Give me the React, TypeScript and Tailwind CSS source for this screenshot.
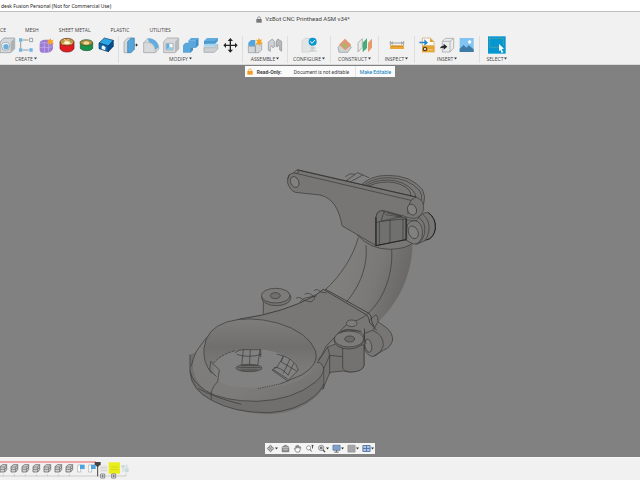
import type { ReactNode } from "react";

interface ToolGroupProps {
    label: string;
    className: string;
    tools: Array<Tool>;
}

interface Tool {
    name: string;
    icon: ReactNode;
    menu?: boolean;
}

const createTools: Array<Tool> = [
    { name: "Hole", icon: <>
        <path d="M12 18 L24 6 H56 V38 L44 50 H12Z" fill="#d5d8da" stroke="#8d9194" strokeWidth="2" />
        <path d="M44 18 L56 6 V38 L44 50Z" fill="#aeb2b5" />
        <circle cx="29" cy="31" r="12" fill="#f3f5f6" stroke="#8d9194" strokeWidth="2" />
        <circle cx="30" cy="32" r="8" fill="#66aede" />
    </> },
    { name: "Pattern", icon: <>
        <path d="M20 12 H38 M14 18 V36 M20 42 H38" stroke="#6c7073" strokeWidth="2" fill="none" />
        <path d="M9 7h10v10H9z M9 37h10v10H9z M40 37h10v10H40z" fill="#70b4e2" />
        <path d="M41 7h9v10h-9z" fill="#f6f6f6" stroke="#74787b" strokeWidth="2" />
    </> },
    { name: "Create Form", icon: <>
        <path d="M11 24 Q11 12 26 11 H42 Q51 16 51 28 V38 Q46 50 32 50 H18 Q10 48 11 38Z" fill="#9b7bd4" />
        <path d="M13 22 Q26 17 38 22 L49 16 M12 35 Q26 31 38 36 L51 29 M25 19 V50 M38 22 V49" stroke="#c9b4ee" strokeWidth="2" fill="none" />
        <path d="M43 6 L46 13 L53 11 L49 17 L54 23 L47 22 L43 29 L40 22 L32 23 L37 17 L33 11 L40 13Z" fill="#f6a524" />
    </> },
    { name: "Red Insert", icon: <>
        <path d="M12 18 V37 Q16 48 33 48 Q50 48 54 37 V18Z" fill="#e31b23" stroke="#701317" strokeWidth="2" />
        <ellipse cx="33" cy="18" rx="21" ry="11" fill="#b99a48" stroke="#702018" strokeWidth="2" />
        <ellipse cx="33" cy="20" rx="9" ry="5" fill="#fff2d5" />
        <path d="M24 10 L31 15 L38 9 M18 25 L26 21 M48 24 L40 20" stroke="#f2d47c" strokeWidth="3" fill="none" />
    </> },
    { name: "Green Insert", icon: <>
        <path d="M13 20 V37 Q17 44 32 44 Q47 44 50 37 V20Z" fill="#16944a" stroke="#195431" strokeWidth="2" />
        <ellipse cx="31" cy="20" rx="19" ry="9" fill="#ad8c3e" stroke="#195431" strokeWidth="2" />
        <ellipse cx="31" cy="21" rx="9" ry="5" fill="#f0d897" />
    </> },
    { name: "Box Joint", icon: <>
        <path d="M9 21 L25 6 L52 13 L37 30Z" fill="#2ba7e8" stroke="#10395c" strokeWidth="2" />
        <path d="M9 21 L37 30 V47 L9 38Z" fill="#0868b2" stroke="#10395c" strokeWidth="2" />
        <path d="M37 30 L52 13 V31 L37 47Z" fill="#064d93" stroke="#10395c" strokeWidth="2" />
        <path d="M17 39 V31 Q22 25 28 34 V43Z" fill="#f4f9ff" />
    </> },
];

const modifyTools: Array<Tool> = [
    { name: "Press Pull", icon: <>
        <path d="M9 17 L20 6 H33 V39 L23 50 H9Z" fill="#d6d9db" stroke="#989c9f" strokeWidth="2" />
        <path d="M20 17 L31 6 H40 V40 L30 50 H20Z" fill="#55a4da" stroke="#347dac" strokeWidth="2" />
        <path d="M40 27 H47 M45 23 L50 27 L45 31Z" fill="#222" stroke="#222" />
    </> },
    { name: "Fillet", icon: <>
        <path d="M8 20 L20 8 Q49 10 53 33 V39 L43 50 H8Z" fill="#d8dadc" stroke="#989c9f" strokeWidth="2" />
        <path d="M20 7 Q49 7 53 33 L43 42 Q41 24 24 19Z" fill="#62ade0" />
        <path d="M8 20 H24 Q39 24 43 43 V50" fill="none" stroke="#b1b4b6" strokeWidth="2" />
    </> },
    { name: "Shell", icon: <>
        <path d="M8 17 L19 6 H53 V39 L42 50 H8Z" fill="#d8dadc" stroke="#989c9f" strokeWidth="2" />
        <path d="M42 17 L53 6 V39 L42 50Z" fill="#b8bbbd" />
        <path d="M15 22 H36 V42 H15Z" fill="#f8f9fa" stroke="#969a9d" strokeWidth="2" />
        <path d="M16 23 H25 V34 L16 41Z" fill="#60aadd" />
        <path d="M25 34 H35 V41 H16Z" fill="#8ac4eb" />
    </> },
    { name: "Combine", icon: <>
        <path d="M6 28 L13 20 H22 V14 L30 6 H52 V28 L44 36 H36 V42 L28 50 H6Z" fill="#5aa7dc" />
        <path d="M22 14 H44 L52 6 M44 14 V36" stroke="#80beea" strokeWidth="2" fill="none" />
        <path d="M44 14 L52 6 V28 L44 36Z M28 36 H36 V42 L28 50Z" fill="#408fc6" />
    </> },
    { name: "Split Body", icon: <>
        <path d="M9 15 L18 6 H50 V15 L41 25 H9Z" fill="#61abdd" />
        <path d="M9 15 H41 L50 6 V15 L41 25 H9Z" fill="#4a9ad0" />
        <path d="M7 30 L17 23 H51 L41 32 H7Z" fill="#a7d3ef" />
        <path d="M9 35 H40 L50 26 V39 L40 49 H9Z" fill="#ced1d3" stroke="#999d9f" strokeWidth="2" />
    </> },
    { name: "Move", icon: <>
        <path d="M28 13 V42 M13 28 H43" stroke="#252525" strokeWidth="4" />
        <path d="M28 6 L36 15 H20Z M28 50 L36 41 H20Z M7 28 L15 20 V36Z M50 28 L42 20 V36Z" fill="#252525" />
    </> },
];

const assembleTools: Array<Tool> = [
    { name: "New Component", icon: <>
        <path d="M10 20 L18 12 H31 V31 H10Z" fill="#55a4da" />
        <path d="M10 31 H31 V50 H10Z M31 28 L38 23 H50 V41 L42 50 H31Z" fill="#d4d7d9" stroke="#94989b" strokeWidth="2" />
        <path d="M42 5 L45 12 L52 10 L48 17 L54 21 L47 23 L44 30 L39 23 L32 24 L37 17 L32 11 L39 12Z" fill="#f6a524" />
    </> },
    { name: "Joint", icon: <>
        <path d="M10 18 L22 9 L28 16 V33 L23 35 L20 29 L16 34 V46 L10 43Z" fill="#cfd2d4" stroke="#8d9194" strokeWidth="2" />
        <path d="M33 18 L38 9 L50 16 V46 L44 42 V32 L40 27 L37 33 L33 31Z" fill="#b6babc" stroke="#8d9194" strokeWidth="2" />
    </> },
];

const configureTools: Array<Tool> = [
    { name: "Configure", icon: <>
        <path d="M9 16 L18 7 H38 V43 L32 48 H9Z" fill="#e2e4e5" stroke="#c8cbcc" strokeWidth="2" />
        <path d="M35 36 H51 M33 45 H53 M42 31 V45" stroke="#bfc2c3" strokeWidth="3" />
        <circle cx="41" cy="17" r="12" fill="#0798cf" />
        <path d="M34 16 L39 22 L48 12" fill="none" stroke="#fff" strokeWidth="3" />
    </> },
];

const constructTools: Array<Tool> = [
    { name: "Offset Plane", icon: <>
        <path d="M9 34 L19 24 H38 L49 34 L38 49 H12Z" fill="#d0d3d4" stroke="#8f9396" strokeWidth="2" />
        <path d="M12 26 L30 8 L49 27 L31 43Z" fill="#e09871" />
        <path d="M20 27 L27 20 L38 31 L31 38Z" fill="#aab66c" />
    </> },
    { name: "Midplane", icon: <>
        <path d="M9 20 L22 8 V34 L9 48Z" fill="#e8eaeb" stroke="#969a9d" strokeWidth="2" />
        <path d="M23 20 L36 7 V36 L23 49Z" fill="#45ac73" />
        <path d="M39 20 L51 8 V35 L39 49Z" fill="#e79a72" />
    </> },
];

const inspectTools: Array<Tool> = [
    { name: "Measure", icon: <>
        <path d="M10 15 V27 M50 15 V27 M13 21 H47 M13 21 l5-4 M13 21 l5 4 M47 21 l-5-4 M47 21 l-5 4" stroke="#6f7376" strokeWidth="2" />
        <path d="M9 28 H51 V39 H9Z" fill="#eaa735" />
        <path d="M15 29v4 M21 29v4 M27 29v4 M33 29v4 M39 29v4 M45 29v4" stroke="#9d6d20" strokeWidth="2" />
    </> },
];

const insertTools: Array<Tool> = [
    { name: "Insert Derive", icon: <>
        <path d="M16 6 H40 L51 17 V29 H16Z" fill="#fafafa" stroke="#c4a15c" strokeWidth="2" />
        <path d="M39 6 L51 18 H39Z" fill="#e69c23" />
        <path d="M15 29 H53 V49 H15Z" fill="#e4a534" />
        <circle cx="24" cy="39" r="5" fill="#fff" stroke="#57401a" strokeWidth="4" />
        <path d="M35 39v5 M40 39v5 M45 39v5" stroke="#fae2ac" strokeWidth="2" />
        <path d="M7 17 H22 V10 L33 20 L22 29 V22 H7Z" fill="#2684ca" />
    </> },
    { name: "Insert Mesh", icon: <>
        <path d="M16 16 L25 7 H50 V36 L39 48 H16Z" fill="#ebecec" stroke="#989b9d" strokeWidth="2" />
        <path d="M16 16 H39 V48 M39 16 L50 7" fill="none" stroke="#989b9d" strokeWidth="2" />
        <path d="M9 37 Q11 29 20 29 V23 L31 32 L20 41 V35 Q14 35 9 37Z" fill="#242424" />
    </> },
    { name: "Canvas", icon: <>
        <path d="M8 6 H50 V48 H8Z" fill="#82c4f1" />
        <path d="M8 38 L20 27 L28 35 L35 28 L50 40 V48 H8Z" fill="#3e7ba7" />
        <circle cx="38" cy="18" r="5" fill="#fff" />
    </> },
];

const selectTools: Array<Tool> = [
    { name: "Select", icon: <>
        <path d="M3 1 H56 V53 H3Z" fill="#0797d0" />
        <path d="M8 7 H49 V29 M8 7 V34 H33" fill="none" stroke="#7fb887" strokeWidth="2" strokeDasharray="5 3" />
        <path d="M36 24 L51 38 L44 39 L49 49 L44 51 L40 41 L36 46Z" fill="#fff" />
    </> },
];

const Caret = () => <svg className="h-[3px] w-[3px]" viewBox="0 0 6 6"><path d="M0 1 H6 L3 5Z" fill="#333" /></svg>;

const Lock: React.FC<{ className: string }> = ({ className }) => (
    <svg className={className} viewBox="0 0 18 21">
        <path d="M5 9 V6 Q5 2 9 2 Q13 2 13 6 V9" fill="none" stroke="currentColor" strokeWidth="2" />
        <path d="M1 9 H17 V20 H1Z" fill="currentColor" />
    </svg>
);

const ToolButton: React.FC<{ tool: Tool }> = ({ tool }) => (
    <button aria-label={tool.name} className="shrink-0">
        <svg className="h-[18px] w-5" viewBox="0 0 60 54">{tool.icon}</svg>
    </button>
);

const ToolGroup: React.FC<ToolGroupProps> = ({ label, className, tools }) => {
    return (<section className={`flex shrink-0 flex-col border-r border-[#dedede] ${className}`}>
        <div className="flex self-center">
            {tools.map(tool => <ToolButton key={tool.name} tool={tool} />)}
        </div>
        <button className="flex h-[9px] items-center gap-px self-center">
            {label}
            <Caret />
        </button>
    </section>)
};

const tabs = ["MESH", "SHEET METAL", "PLASTIC", "UTILITIES"];

const Ribbon = () => {
    return (<header className="border-b border-[#dadada] bg-[#f1f1f1] pb-px text-[5px] leading-[8px] text-[#444]">
        <div className="flex h-[14px] items-center justify-center gap-[3px] pr-[34px]">
            <Lock className="h-[7px] w-[6px] text-[#777]" />
            <h1 className="font-[Roboto,sans-serif] text-[6px]">VzBot CNC Printhead ASM v34*</h1>
        </div>
        <nav className="mb-[2px] flex h-2 items-center">
            <button className="mr-5 w-[5px] text-left">CE</button>
            <div className="flex gap-5">
                {tabs.map(tab => <button key={tab} className="whitespace-nowrap">{tab}</button>)}
            </div>
        </nav>
        <div className="flex">
            <section className="flex w-[119px] shrink-0 flex-col overflow-hidden border-r border-[#dedede]">
                <div className="flex justify-end pr-[2px]">
                    {createTools.map(tool => <ToolButton key={tool.name} tool={tool} />)}
                </div>
                <button className="ml-[15px] flex h-[9px] items-center gap-px self-start">CREATE<Caret /></button>
            </section>
            <ToolGroup label="MODIFY" className="w-[124px]" tools={modifyTools} />
            <ToolGroup label="ASSEMBLE" className="w-[45px]" tools={assembleTools} />
            <ToolGroup label="CONFIGURE" className="w-[43px]" tools={configureTools} />
            <ToolGroup label="CONSTRUCT" className="w-12" tools={constructTools} />
            <ToolGroup label="INSPECT" className="w-9" tools={inspectTools} />
            <ToolGroup label="INSERT" className="w-[65px]" tools={insertTools} />
            <ToolGroup label="SELECT" className="w-[34px] border-r-0" tools={selectTools} />
        </div>
    </header>)
};

const Model = () => {
    return (<svg className="absolute inset-0 h-full w-full" viewBox="0 65 640 392" role="img" aria-label="Printhead duct">
        <defs>
            <linearGradient id="tube" x1="0" x2="1" y1="0" y2="0.3">
                <stop offset="0" stopColor="#858481" />
                <stop offset="0.65" stopColor="#7a7977" />
                <stop offset="1" stopColor="#696866" />
            </linearGradient>
            <linearGradient id="bowl" x1="0" x2="0" y1="0" y2="1">
                <stop offset="0" stopColor="#7e7d7b" />
                <stop offset="0.4" stopColor="#706f6d" />
                <stop offset="0.7" stopColor="#7b7a78" />
                <stop offset="1" stopColor="#7e7d7b" />
            </linearGradient>
            <linearGradient id="rim" x1="0" x2="1" y1="0" y2="1">
                <stop offset="0" stopColor="#7f7e7c" />
                <stop offset="0.6" stopColor="#7d7c7a" />
                <stop offset="1" stopColor="#71706e" />
            </linearGradient>
        </defs>

        {/* duct, ring and mounting plate */}
        <g transform="translate(270 160) scale(0.33333)" fill="none" stroke="#363635" strokeWidth="2" strokeLinejoin="round">
            <path d="M265 232 C250 290 210 350 165 390 L290 465 L320 490 C365 450 425 370 428 250 Q340 285 265 232Z" fill="url(#tube)" stroke="none" />
            <path d="M265 232 C250 290 210 350 165 390 M288 256 C294 320 268 380 230 425 M365 268 C369 330 350 410 290 465" />
            <path d="M262 225 Q300 268 360 268 Q415 266 430 246 L400 220Z" fill="#787775" />

            <path d="M268 80 Q300 46 352 46 Q425 46 458 90 Q468 110 461 132 L430 120 L270 85Z" fill="#797876" />
            <path d="M272 83 Q305 53 354 53 Q415 54 448 91 Q458 106 455 121" />
            <path d="M278 84 Q308 60 354 60 Q403 62 430 93 Q438 104 438 112" />
            <path d="M285 85 Q312 66 355 66 Q395 68 417 90 Q423 99 422 108" />
            <path d="M230 61 L263 38 L297 53 M226 50 Q238 38 254 42 M244 64 L278 45 M228 61 L265 76" />

            <path d="M440 181 Q456 155 475 158 Q499 175 496 207 Q491 235 469 240 L440 253 L405 239 V180Z" fill="#777674" />
            <path d="M459 164 Q480 180 477 211 Q474 232 464 242 M447 173 Q468 186 464 220 Q459 240 446 250" />
            <path d="M475 158 Q499 175 496 207 Q491 235 469 240" stroke="#222" strokeWidth="3" />
            <path d="M412 195 Q425 176 444 185 Q463 202 455 233 Q447 254 430 252 L405 239Z" fill="#7c7b79" />

            <path d="M70 39 L82 29 L438 111 Q464 121 461 148 Q455 170 435 175 Q416 176 405 169 L350 154 Q320 145 318 172 V257 L216 197 C208 150 190 114 150 105 L76 97 Q60 91 53 69 Q50 42 70 39Z" fill="#777674" />
            <path d="M70 39 L82 41 L423 121 Q410 142 414 163 M82 41 L86 33 M53 58 L59 42 M423 121 L438 111" />
            <path d="M82 30 L438 111" stroke="#2a2a29" />
            <path d="M318 172 Q321 151 340 152 L348 164 L410 174 V238 L318 257Z" fill="#70706e" />
            <path d="M318 188 L333 184 L410 176 M333 184 L342 154 L397 169 L333 184 M328 184 V255 M360 181 V248 M399 176 V239 M350 159 L392 169" />
            <path d="M318 172 V257 L408 239 V176" stroke="#222" strokeWidth="3" />
            <ellipse cx="74" cy="66" rx="12" ry="17" transform="rotate(-25 74 66)" fill="#818181" />
            <ellipse cx="426" cy="149" rx="13" ry="17" transform="rotate(-25 426 149)" fill="#818181" />
            <ellipse cx="430" cy="217" rx="14" ry="20" transform="rotate(-25 430 217)" fill="#818181" />
        </g>

        {/* nozzle ring and screw bosses */}
        <g transform="translate(180 280) scale(0.33333)" fill="none" stroke="#363635" strokeWidth="2" strokeLinejoin="round">
            <path d="M562 125 L588 104 Q595 110 594 125 L620 144 Q638 158 638 180 Q632 204 610 211 L578 230 Q557 226 552 199 L554 145Z" fill="#777674" />
            <path d="M578 151 Q610 165 610 194 Q606 217 582 229 M593 126 Q584 146 578 151 L554 160" />
            <ellipse cx="565" cy="197" rx="10" ry="20" transform="rotate(-12 565 197)" fill="#7e7d7b" />
            <path d="M250 58 L250 101 L287 95 L328 72 V50Z" fill="#7b7a78" stroke="none" />
            <path d="M250 62 V101" />
            <ellipse cx="289" cy="53" rx="44" ry="24" fill="#747371" />
            <ellipse cx="287" cy="47" rx="43" ry="22" fill="#7c7b79" />
            <ellipse cx="286" cy="47" rx="15" ry="9" fill="#706f6d" />

            <path d="M180 117 Q285 100 375 61 L430 28 L560 105 Q573 116 570 145 L490 165 Q445 190 444 210 L410 250 L300 260 L120 160Z" fill="#797775" stroke="none" />
            <path d="M180 117 Q310 99 405 47 L430 28 M430 28 L557 103 Q567 109 569 128 L590 151 M437 28 L565 99 Q575 105 575 124 L582 140" strokeWidth="2" stroke="#242423" />
            <path d="M348 55 Q358 48 370 60 L392 66 Q410 58 400 46 M374 43 Q386 35 399 48 M402 32 Q412 24 422 36 L440 39 M360 67 Q365 56 379 53 L410 48" />
            <path d="M410 248 Q428 225 438 199 L498 135 Q540 119 560 105" />
            <ellipse cx="515" cy="130" rx="16" ry="10" fill="#7d7c7a" />

            <path d="M410 250 L444 201 L470 190 L489 207 L552 200 V257 Q545 276 508 276 L490 273 L450 277 L428 328 L410 320Z" fill="#737270" />
            <path d="M442 200 Q448 216 449 230 M410 248 Q425 251 431 267 L449 226 L488 230 M431 267 V327 M449 227 V281" />
            <path d="M488 195 H552 V257 Q547 276 510 276 Q493 275 488 265Z" fill="#737270" />
            <path d="M470 171 Q475 149 508 149 Q535 149 550 163 L558 191" />
            <ellipse cx="506" cy="181" rx="44" ry="26" fill="#6f6e6c" />
            <ellipse cx="507" cy="177" rx="44" ry="24" fill="#7c7b79" />
            <ellipse cx="509" cy="177" rx="15" ry="9" fill="#6b6a68" />
            <path d="M484 158 L498 149 L546 154 M553 145 V181" />

            <path d="M30 224 V285 Q35 332 95 361 Q170 402 275 403 Q354 397 402 355 Q426 337 430 319 V265 Q413 248 408 220 L180 117 Q96 140 50 215Z" fill="#706f6d" stroke="none" />
            <path d="M180 117 Q94 137 50 213 Q17 277 77 332 Q130 364 232 364 Q340 360 405 307 Q432 284 431 264 Q422 242 410 248 Q400 207 365 171 Q305 110 180 117Z" fill="url(#rim)" stroke="none" />
            <path d="M180 117 Q94 137 50 213 Q38 235 34 258 M30 224 V274 Q36 305 77 332 Q130 364 232 364 Q340 360 405 307 Q432 284 431 264 Q422 242 410 248" />
            <path d="M30 274 Q34 329 95 361 Q160 398 266 398 Q349 393 403 349 Q427 326 431 311 M55 325 Q100 352 184 373" />
            <path d="M72 205 Q78 146 140 126 Q207 106 292 129 Q383 155 407 213 Q424 270 355 302 Q298 326 213 326 Q119 323 95 280 Q68 246 72 205Z" fill="url(#bowl)" stroke="none" />
            <path d="M101 249 Q129 218 183 210 Q251 199 312 225 Q348 240 354 260 Q356 282 324 303 Q243 331 147 318 Q108 309 101 276Z" fill="#818181" stroke="none" />
            <path d="M95 280 Q68 246 72 205 Q78 146 140 126 Q207 106 292 129 Q383 155 407 213 Q418 254 365 285 L300 312" />
            <path d="M92 244 L118 270 L113 305 Q89 326 94 359 M92 244 L89 270 L110 290" />
            <path d="M233 326 L300 312" strokeDasharray="4 3" />
            <path d="M101 249 Q125 222 165 212" strokeDasharray="8 3" />
            <path d="M165 218 Q178 208 190 209 L185 257 M190 209 H240 L232 263 M211 209 L208 264 M170 223 Q205 235 244 223 M242 207 V232" />
            <ellipse cx="207" cy="264" rx="39" ry="11" fill="#727170" />
            <path d="M174 263 H241 M182 270 H233 M184 257 H232" />
            <path d="M290 222 Q345 233 355 270 L323 303 L276 270 L291 261 L312 228 M308 229 L304 246 L350 273 M330 237 L310 280 M342 248 L324 286 M280 269 L323 297 M282 263 Q298 258 325 285" />
        </g>
    </svg>)
};

const viewTools: Array<Tool> = [
    { name: "Orbit", menu: true, icon: <><path d="M15 3 L20 10 H10Z M15 27 L20 20 H10Z M3 15 L10 10 V20Z M27 15 L20 10 V20Z" fill="none" stroke="#555" strokeWidth="2" /><circle cx="15" cy="15" r="3" fill="#999" /></> },
    { name: "Look At", icon: <><path d="M4 10 L15 4 L26 10 V26 H4Z" fill="#929292" stroke="#555" strokeWidth="2" /><path d="M3 12 H27 M8 18 H22" stroke="#ddd" strokeWidth="2" /></> },
    { name: "Pan", icon: <path d="M9 15 V7 Q12 4 13 14 V4 Q17 2 17 13 V5 Q21 4 21 15 L23 9 Q28 8 25 16 L21 27 H11 L4 16 Q4 12 9 17Z" fill="#fafafa" stroke="#555" strokeWidth="2" /> },
    { name: "Zoom", icon: <><circle cx="12" cy="13" r="7" fill="#fff" stroke="#666" strokeWidth="2" /><path d="M17 18 L22 25 M25 4 V15 M22 7 L25 3 L28 7" stroke="#444" strokeWidth="3" fill="none" /></> },
    { name: "Fit", menu: true, icon: <><circle cx="14" cy="13" r="9" fill="#ddd" stroke="#666" strokeWidth="2" /><path d="M10 9 H18 V17 H10Z" fill="#777" /><path d="M20 20 L27 27" stroke="#444" strokeWidth="4" /></> },
    { name: "Display Settings", menu: true, icon: <><path d="M3 4 H27 V21 H3Z" fill="#7da2d0" stroke="#536478" strokeWidth="2" /><path d="M15 21 V26 M8 27 H22" stroke="#555" strokeWidth="3" /></> },
    { name: "Grid and Snaps", menu: true, icon: <><path d="M3 4 H27 V27 H3Z" fill="#aaa" stroke="#888" strokeWidth="2" /><path d="M3 11 H27 M3 19 H27 M11 4 V27 M19 4 V27" stroke="#999" /></> },
    { name: "Viewports", menu: true, icon: <><path d="M3 5 H27 V25 H3Z" fill="#a9c6ed" stroke="#52749e" strokeWidth="3" /><path d="M15 5 V25 M3 15 H27" stroke="#52749e" strokeWidth="3" /></> },
];

const Viewport = () => {
    return (<main className="relative flex grow flex-col items-center justify-between bg-[#818181] pt-px pb-[3px]">
        <Model />
        <div className="relative flex h-[11px] items-center bg-[#fafafa] font-[Roboto,sans-serif] text-[5px] leading-[8px] text-[#444]">
            <Lock className="ml-[2px] mr-[4px] h-[7px] w-[6px] text-[#f39a20]" />
            <strong className="w-[37px]">Read-Only:</strong>
            <span className="w-[61px]">Document is not editable</span>
            <button className="h-full border-l border-[#e2e2e2] px-1 text-[#087bb8]">Make Editable</button>
        </div>
        <div className="relative flex h-[11px] items-center gap-[3px] bg-[#f4f4f4] px-px">
            {viewTools.map(tool => <button key={tool.name} aria-label={tool.name} className="flex items-center">
                <svg className="h-[9px] w-[9px]" viewBox="0 0 30 30">{tool.icon}</svg>
                {tool.menu ? <Caret /> : null}
            </button>)}
        </div>
    </main>)
};

const Timeline = () => {
    return (<footer className="flex h-[23px] shrink-0 overflow-hidden border-t border-[#f9f5f7] bg-[#f1f1f1]">
        <svg className="h-[22px] w-[140px]" viewBox="0 0 420 66" role="img" aria-label="Timeline">
            <path d="M0 9 H288 V15 H0Z" fill="#f2a6a8" />
            <path d="M0 54 H378 V47" fill="none" stroke="#bbb" strokeWidth="2" />
            {[10, 43, 76, 109, 142, 175, 208].map(x => <g key={x} transform={`translate(${x} 31)`}>
                <path d="M-10 -5 L-3 -11 H10 V4 L4 11 H-10Z" fill="#d2d2d2" stroke="#555" strokeWidth="2" />
                <path d="M-10 -4 H4 L10 -11 M4 -4 V11 M-10 3 H4 L10 -3" fill="none" stroke="#666" strokeWidth="2" />
                <path d="M0 18 V24" stroke="#bbb" strokeWidth="2" />
            </g>)}
            {[233, 266].map(x => <g key={x} transform={`translate(${x} 20)`}>
                <path d="M0 1 H9 V22 H0Z" fill="#fff" stroke="#aaa" strokeWidth="2" />
                <path d="M7 0 H21 V13 H7Z" fill="#4da4dc" />
            </g>)}
            <path d="M300 21 H322 V43 H300Z" fill="#e9e5e5" />
            <path d="M301 29 H321 M302 37 H321" stroke="#d0cccc" strokeWidth="2" />
            <path d="M326 13 H360 V47 H326Z" fill="#e9ee18" />
            <path d="M333 27 H354 M333 35 H354" stroke="#c9cd25" strokeWidth="2" />
            <path d="M364 21 H374 V30 H364Z M375 31 H386 V43 H375Z" fill="#cadbdd" />
            <path d="M366 31 H374 V41 H366Z M376 20 H384 V29 H376Z" fill="#e0e2e2" />
            <path d="M284 12 H302 V19 L295 26 H291 L284 19Z" fill="#444" />
            <path d="M293 20 V55" stroke="#444" strokeWidth="3" />
            {[308, 341].map(x => <g key={x} transform={`translate(${x} 54)`}>
                <path d="M-6 -6 H6 V6 H-6Z" fill="#fff" stroke="#555" strokeWidth="2" />
                <path d="M-4 0 H4 M0 -4 V4" stroke="#444" strokeWidth="2" />
            </g>)}
        </svg>
    </footer>)
};

const App = () => {
    return (<div className="flex min-h-screen flex-col overflow-hidden font-['Open_Sans','Noto_Sans',sans-serif]">
        <div className="flex h-3 shrink-0 items-center border-b border-[#bdbdbd] bg-white px-px font-['Noto_Sans',sans-serif] text-[5px] leading-[8px] text-[#222]">
            <span className="whitespace-nowrap">desk Fusion Personal (Not for Commercial Use)</span>
        </div>
        <Ribbon />
        <Viewport />
        <Timeline />
    </div>)
};

export default App;
